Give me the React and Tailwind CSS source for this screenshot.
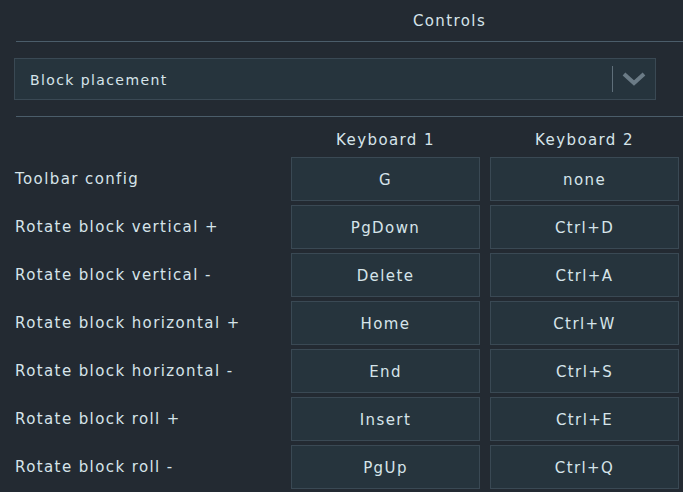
const rows = [
  ["Toolbar config", "G", "none"],
  ["Rotate block vertical +", "PgDown", "Ctrl+D"],
  ["Rotate block vertical -", "Delete", "Ctrl+A"],
  ["Rotate block horizontal +", "Home", "Ctrl+W"],
  ["Rotate block horizontal -", "End", "Ctrl+S"],
  ["Rotate block roll +", "Insert", "Ctrl+E"],
  ["Rotate block roll -", "PgUp", "Ctrl+Q"],
];

const Cell = ({ children }) => (
  <div className="h-[44px] flex items-center justify-center pt-[2px] bg-[#26343d] border border-[#3a4954]">
    {children}
  </div>
);

export default function App() {
  return (
    <div
      className="w-[683px] h-[492px] overflow-hidden bg-[#232a32] text-[#d6e4ea] text-[15px] tracking-[1.4px]"
      style={{ fontFamily: '"DejaVu Sans", "Liberation Sans", sans-serif' }}
    >
      {/* Title */}
      <div className="h-[41px] flex items-center justify-center pl-[216px] pt-[1px]">
        Controls
      </div>
      <div className="ml-[16px] h-px bg-[#4b5d6a]" />

      {/* Category dropdown */}
      <div className="mt-[16px] ml-[14px] w-[642px] h-[42px] flex items-center bg-[#26343d] border border-[#3a4954]">
        <span className="pl-[15px] pt-[3px] flex-1 text-[14px]">Block placement</span>
        <div className="w-px h-[26px] bg-[#5f6f7a]" />
        <svg width="26" height="16" viewBox="0 0 26 16" className="ml-[8px] mr-[8px]">
          <polyline
            points="3,3 13,12 23,3"
            fill="none"
            stroke="#6b7b86"
            strokeWidth="4"
          />
        </svg>
      </div>
      <div className="mt-[16px] ml-[16px] h-px bg-[#4b5d6a]" />

      {/* Bindings */}
      <div className="pl-[15px] grid grid-cols-[266px_189px_189px] gap-x-[10px] gap-y-[4px]">
        <div className="h-[36px]" />
        <div className="h-[36px] flex items-center justify-center pt-[10px]">Keyboard 1</div>
        <div className="h-[36px] flex items-center justify-center pt-[10px]">Keyboard 2</div>
        {rows.map(([label, k1, k2]) => (
          <div key={label} className="contents">
            <div className="h-[44px] flex items-center pt-[1px]">{label}</div>
            <Cell>{k1}</Cell>
            <Cell>{k2}</Cell>
          </div>
        ))}
      </div>
    </div>
  );
}
